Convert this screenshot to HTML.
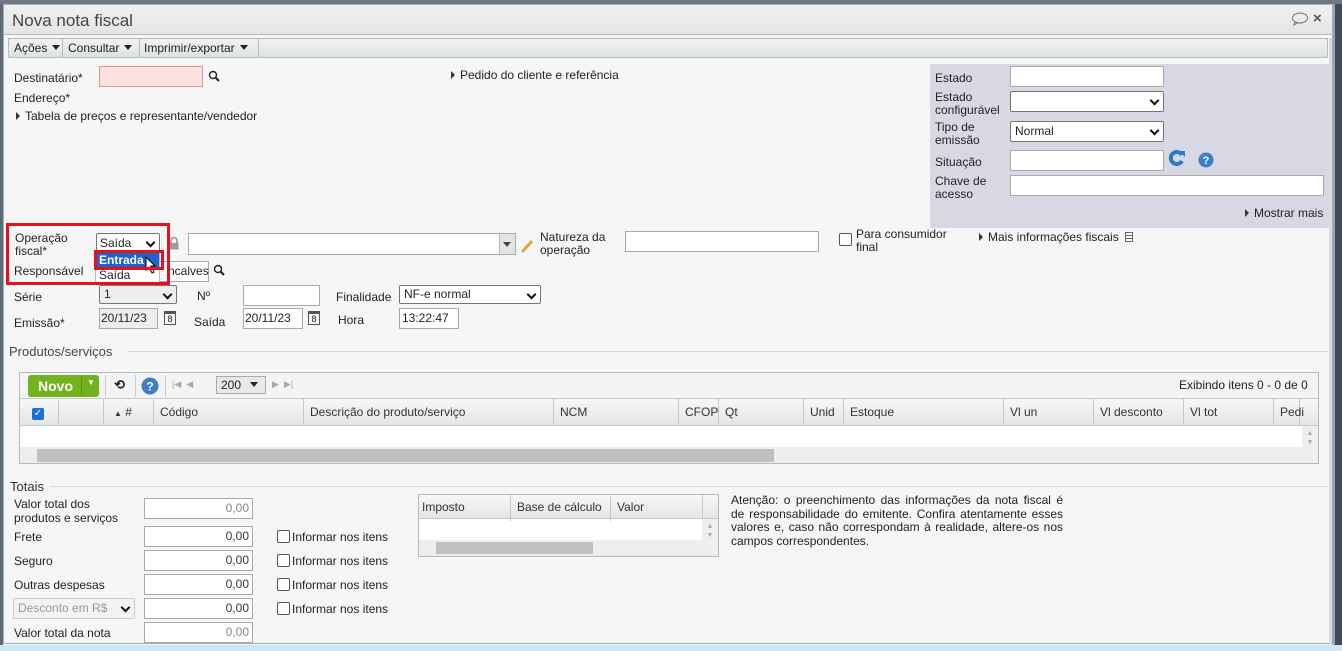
<!DOCTYPE html>
<html><head><meta charset="utf-8"><style>
*{box-sizing:border-box;margin:0;padding:0}
body{width:1342px;height:651px;overflow:hidden;background:#f4f6f6;font-family:"Liberation Sans",sans-serif;font-size:12px;color:#222;position:relative}
.a{position:absolute;white-space:nowrap}
.in{position:absolute;background:#fff;border:1px solid #a9a9a9;height:21px;font-size:12px;padding:2px 3px}
.sel{position:absolute;background:#fff;border:1px solid #767676;border-radius:2px;height:21px;padding:2px 4px;font-size:12px}
.sel:after{content:"";position:absolute;right:5px;top:5px;width:5px;height:5px;border-right:2px solid #111;border-bottom:2px solid #111;transform:rotate(45deg)}
.tri{display:inline-block;width:0;height:0;border-left:4px solid #333;border-top:4px solid transparent;border-bottom:4px solid transparent;margin-right:5px;vertical-align:0}
.dn{display:inline-block;width:0;height:0;border-top:5px solid #222;border-left:4px solid transparent;border-right:4px solid transparent;margin-left:5px;vertical-align:2px}
.num{text-align:right;color:#333}
.cb{position:absolute;width:13px;height:13px;border:1px solid #555;border-radius:2px;background:#fff}
.th{position:absolute;top:0;height:26px;border-right:1px solid #c6c9cc;padding:6px 6px;color:#333}
</style></head><body>
<div class="a" style="left:0;top:0;width:3px;height:651px;background:#5e6a76"></div>
<div class="a" style="left:1334px;top:0;width:8px;height:651px;background:#3d4c5c"></div>
<div class="a" style="left:1332px;top:0;width:3px;height:651px;background:#9aa3ab"></div>
<div class="a" style="left:0;top:0;width:1342px;height:4px;background:#6d7883"></div>
<div class="a" style="left:3px;top:4px;width:1330px;height:640px;border:1px solid #a8adb1;background:#f5f7f7"></div>
<div class="a" style="left:4px;top:5px;width:1328px;height:30px;background:linear-gradient(#eef0f1,#e3e5e7);border-bottom:1px solid #b8bcc0"></div>
<div class="a" style="left:12px;top:11px;font-size:17px;color:#444">Nova nota fiscal</div>
<svg class="a" style="left:1291px;top:12px" width="18" height="14"><ellipse cx="9" cy="6" rx="7.5" ry="5" fill="none" stroke="#777"/><path d="M4 10 L3 13 L7 10.5" fill="none" stroke="#777"/></svg>
<div class="a" style="left:1313px;top:10px;font-size:15px;font-weight:bold;color:#555">×</div>
<div class="a" style="left:8px;top:38px;width:1320px;height:20px;background:linear-gradient(#f1f2f3,#dfe2e4);border:1px solid #b8bcc0"></div>
<div class="a" style="left:9px;top:39px;width:54px;height:18px;border-right:1px solid #b8bcc0;padding:2px 5px">Ações<span class="dn"></span></div>
<div class="a" style="left:63px;top:39px;width:77px;height:18px;border-right:1px solid #b8bcc0;padding:2px 5px">Consultar<span class="dn"></span></div>
<div class="a" style="left:140px;top:39px;width:119px;height:18px;border-right:1px solid #b8bcc0;padding:2px 4px">Imprimir/exportar<span class="dn"></span></div>
<div class="a" style="left:1329px;top:38px;width:3px;height:606px;background:#d8dcdf"></div>

<div class="a" style="left:14px;top:71px">Destinatário*</div>
<div class="in" style="left:99px;top:66px;width:104px;background:#fde2e2;border-color:#e89090"></div>
<svg class="a" style="left:208px;top:70px" width="12" height="12"><circle cx="5" cy="5" r="3.5" fill="none" stroke="#222" stroke-width="1.4"/><path d="M7.5 7.5 L11 11" stroke="#222" stroke-width="2"/></svg>
<div class="a" style="left:451px;top:68px"><span class="tri"></span>Pedido do cliente e referência</div>
<div class="a" style="left:14px;top:91px">Endereço*</div>
<div class="a" style="left:16px;top:109px"><span class="tri"></span>Tabela de preços e representante/vendedor</div>

<div class="a" style="left:930px;top:64px;width:400px;height:164px;background:#d8d8e4"></div>
<div class="a" style="left:935px;top:71px">Estado</div>
<div class="in" style="left:1010px;top:66px;width:154px"></div>
<div class="a" style="left:935px;top:91px;line-height:13px">Estado<br>configurável</div>
<div class="sel" style="left:1010px;top:91px;width:154px"></div>
<div class="a" style="left:935px;top:121px;line-height:13px">Tipo de<br>emissão</div>
<div class="sel" style="left:1010px;top:121px;width:154px">Normal</div>
<div class="a" style="left:935px;top:155px">Situação</div>
<div class="in" style="left:1010px;top:150px;width:154px"></div>
<svg class="a" style="left:1168px;top:150px" width="18" height="16"><path d="M14 5 A6 6 0 1 0 14 11" fill="none" stroke="#2a7bc8" stroke-width="4"/><path d="M11 1 L17 1 L17 7 Z" fill="#2a7bc8"/></svg>
<svg class="a" style="left:1198px;top:152px" width="16" height="16"><circle cx="8" cy="8" r="7.5" fill="#3a7fc8"/><text x="8" y="12" font-size="11" font-weight="bold" fill="#fff" text-anchor="middle" font-family="Liberation Sans">?</text></svg>
<div class="a" style="left:935px;top:175px;line-height:13px">Chave de<br>acesso</div>
<div class="in" style="left:1010px;top:175px;width:314px"></div>
<div class="a" style="left:1245px;top:206px"><span class="tri"></span>Mostrar mais</div>

<div class="a" style="left:15px;top:232px;line-height:13px">Operação<br>fiscal*</div>
<div class="sel" style="left:96px;top:233px;width:64px;height:20px;padding:2px 3px">Saída</div>
<svg class="a" style="left:168px;top:236px" width="12" height="14"><path d="M3 7 V4.5 A3 3 0 0 1 9 4.5 V7" fill="none" stroke="#999" stroke-width="1.6"/><rect x="1.5" y="7" width="9" height="6.5" fill="#999"/></svg>
<div class="in" style="left:188px;top:233px;width:328px;height:22px"></div>
<div class="a" style="left:499px;top:234px;width:16px;height:20px;background:#e4e4e4;border-left:1px solid #bbb"><span class="dn" style="margin:8px 0 0 3px;border-top-color:#444"></span></div>
<svg class="a" style="left:520px;top:238px" width="14" height="16"><path d="M2 14 L12 3" stroke="#e8a040" stroke-width="3"/></svg>
<div class="a" style="left:540px;top:231px;line-height:13px">Natureza da<br>operação</div>
<div class="in" style="left:625px;top:231px;width:194px"></div>
<div class="cb" style="left:839px;top:233px"></div>
<div class="a" style="left:856px;top:228px;line-height:13px">Para consumidor<br>final</div>
<div class="a" style="left:979px;top:230px"><span class="tri"></span>Mais informações fiscais <span style="display:inline-block;width:8px;height:10px;border:1px solid #666;vertical-align:-1px;margin-left:3px;background:repeating-linear-gradient(#fff 0 2px,#666 2px 3px)"></span></div>

<div class="a" style="left:14px;top:264px">Responsável</div>
<div class="in" style="left:99px;top:261px;width:110px;padding-left:68px">ncalves</div>
<svg class="a" style="left:213px;top:264px" width="12" height="12"><circle cx="5" cy="5" r="3.5" fill="none" stroke="#222" stroke-width="1.4"/><path d="M7.5 7.5 L11 11" stroke="#222" stroke-width="2"/></svg>
<div class="a" style="left:95px;top:252px;width:65px;height:33px;background:#fff;border:1px solid #bbb;border-radius:0 0 3px 3px"></div>
<div class="a" style="left:96px;top:252px;width:63px;height:16px;background:#1a63c8;color:#fff;font-weight:bold;padding:1px 3px">Entrada</div>
<div class="a" style="left:99px;top:268px">Saída</div>
<svg class="a" style="left:145px;top:256px" width="12" height="18"><path d="M1 1 L1 14 L4 11 L7 17 L9 16 L6 10 L10 10 Z" fill="#fff" stroke="#000"/></svg>
<div class="a" style="left:94px;top:250px;width:70px;height:20px;border:3px solid #e8101c"></div>
<div class="a" style="left:6px;top:223px;width:164px;height:62px;border:3px solid #e8101c"></div>

<div class="a" style="left:14px;top:290px">Série</div>
<div class="sel" style="left:99px;top:285px;width:78px;height:19px;background:#eee;padding:1px 4px">1</div>
<div class="a" style="left:197px;top:289px">Nº</div>
<div class="in" style="left:243px;top:285px;width:77px"></div>
<div class="a" style="left:336px;top:290px">Finalidade</div>
<div class="sel" style="left:399px;top:285px;width:142px;height:19px;padding:1px 4px">NF-e normal</div>
<div class="a" style="left:14px;top:316px">Emissão*</div>
<div class="in" style="left:99px;top:308px;width:59px;background:#eee;padding:2px 1px">20/11/23</div>
<div class="a" style="left:164px;top:311px;width:12px;height:14px;border:1px solid #555;border-top-width:3px;font-size:9px;text-align:center;line-height:10px">8</div>
<div class="a" style="left:194px;top:315px">Saída</div>
<div class="in" style="left:243px;top:308px;width:60px;padding:2px 1px">20/11/23</div>
<div class="a" style="left:308px;top:311px;width:12px;height:14px;border:1px solid #555;border-top-width:3px;font-size:9px;text-align:center;line-height:10px">8</div>
<div class="a" style="left:338px;top:313px">Hora</div>
<div class="in" style="left:399px;top:308px;width:60px;padding:2px 2px">13:22:47</div>

<div class="a" style="left:9px;top:344px;font-size:13px;color:#444">Produtos/serviços</div>
<div class="a" style="left:128px;top:351px;width:1200px;height:1px;background:#d5d8da"></div>
<div class="a" style="left:19px;top:372px;width:1300px;height:92px;border:1px solid #b3b8bc;background:#fff"></div>
<div class="a" style="left:20px;top:373px;width:1298px;height:26px;background:#f3f4f5;border-bottom:1px solid #c6c9cc"></div>
<div class="a" style="left:28px;top:375px;width:71px;height:22px;background:#72b21c;border-radius:3px;color:#fff;font-weight:bold;font-size:14px;padding:3px 10px">Novo</div>
<div class="a" style="left:81px;top:377px;width:1px;height:18px;background:#5a9414"></div>
<div class="a" style="left:87px;top:378px;color:#fff;font-size:8px">▼</div>
<div class="a" style="left:105px;top:375px;width:1px;height:22px;background:#ccc"></div>
<div class="a" style="left:114px;top:377px;font-size:13px;font-weight:bold">⟲</div>
<div class="a" style="left:135px;top:375px;width:1px;height:22px;background:#ccc"></div>
<svg class="a" style="left:141px;top:377px" width="18" height="18"><circle cx="9" cy="9" r="8.5" fill="#3a7fc8"/><text x="9" y="13.5" font-size="12" font-weight="bold" fill="#fff" text-anchor="middle" font-family="Liberation Sans">?</text></svg>
<div class="a" style="left:165px;top:375px;width:1px;height:22px;background:#ccc"></div>
<div class="a" style="left:172px;top:379px;color:#aaa;font-size:9px">|◀ &nbsp;◀</div>
<div class="a" style="left:216px;top:376px;width:50px;height:18px;border:1px solid #aaa;background:#e8e8e8;padding:1px 4px">200<span class="dn" style="margin-left:9px"></span></div>
<div class="a" style="left:272px;top:379px;color:#aaa;font-size:9px">▶ &nbsp;▶|</div>
<div class="a" style="left:1179px;top:378px">Exibindo itens 0 - 0 de 0</div>
<div class="a" style="left:20px;top:399px;width:1298px;height:27px;background:linear-gradient(#f6f7f8,#e3e5e7);border-bottom:1px solid #c6c9cc">
<div class="th" style="left:0;width:39px"><span style="display:inline-block;width:12px;height:12px;background:#1a6fd8;border-radius:2px;color:#fff;font-size:10px;line-height:12px;text-align:center;margin-left:6px">✓</span></div>
<div class="th" style="left:39px;width:45px"></div>
<div class="th" style="left:84px;width:50px;padding-left:10px"><span style="font-size:8px">▲</span> #</div>
<div class="th" style="left:134px;width:150px">Código</div>
<div class="th" style="left:284px;width:250px">Descrição do produto/serviço</div>
<div class="th" style="left:534px;width:125px">NCM</div>
<div class="th" style="left:659px;width:40px">CFOP</div>
<div class="th" style="left:699px;width:85px">Qt</div>
<div class="th" style="left:784px;width:40px">Unid</div>
<div class="th" style="left:824px;width:160px">Estoque</div>
<div class="th" style="left:984px;width:90px">Vl un</div>
<div class="th" style="left:1074px;width:90px">Vl desconto</div>
<div class="th" style="left:1164px;width:90px">Vl tot</div>
<div class="th" style="left:1254px;width:26px">Pedi</div>
</div>
<div class="a" style="left:20px;top:447px;width:1283px;height:16px;background:#eceeef"></div>
<div class="a" style="left:37px;top:449px;width:737px;height:13px;background:#c0c0c0"></div>
<div class="a" style="left:1302px;top:426px;width:16px;height:37px;background:#eceeef;color:#aaa;font-size:7px;text-align:center;line-height:9px;padding-top:3px">▲<br>▼</div>

<div class="a" style="left:10px;top:479px;font-size:13px;color:#333">Totais</div>
<div class="a" style="left:50px;top:486px;width:1278px;height:1px;background:#d5d8da"></div>
<div class="a" style="left:14px;top:497px;line-height:14px">Valor total dos<br>produtos e serviços</div>
<div class="in num" style="left:144px;top:498px;width:109px;color:#888">0,00</div>
<div class="a" style="left:14px;top:530px">Frete</div>
<div class="in num" style="left:144px;top:526px;width:109px">0,00</div>
<div class="a" style="left:14px;top:554px">Seguro</div>
<div class="in num" style="left:144px;top:550px;width:109px">0,00</div>
<div class="a" style="left:14px;top:578px">Outras despesas</div>
<div class="in num" style="left:144px;top:574px;width:109px">0,00</div>
<div class="sel" style="left:13px;top:598px;width:122px;color:#999;border-color:#ccc;background:#f3f3f3">Desconto em R$</div>
<div class="in num" style="left:144px;top:598px;width:109px">0,00</div>
<div class="a" style="left:14px;top:626px">Valor total da nota</div>
<div class="in num" style="left:144px;top:622px;width:109px;color:#888">0,00</div>
<div class="cb" style="left:277px;top:530px"></div><div class="a" style="left:292px;top:530px">Informar nos itens</div>
<div class="cb" style="left:277px;top:554px"></div><div class="a" style="left:292px;top:554px">Informar nos itens</div>
<div class="cb" style="left:277px;top:578px"></div><div class="a" style="left:292px;top:578px">Informar nos itens</div>
<div class="cb" style="left:277px;top:602px"></div><div class="a" style="left:292px;top:602px">Informar nos itens</div>

<div class="a" style="left:418px;top:494px;width:301px;height:63px;border:1px solid #b3b8bc;background:#fff"></div>
<div class="a" style="left:419px;top:495px;width:299px;height:24px;background:linear-gradient(#f6f7f8,#e3e5e7);border-bottom:1px solid #c6c9cc">
<div class="th" style="left:0;width:92px;padding:5px 3px">Imposto</div>
<div class="th" style="left:92px;width:100px;padding:5px 6px">Base de cálculo</div>
<div class="th" style="left:192px;width:92px;padding:5px 6px">Valor</div>
</div>
<div class="a" style="left:419px;top:540px;width:283px;height:16px;background:#eceeef"></div>
<div class="a" style="left:436px;top:542px;width:157px;height:12px;background:#c0c0c0"></div>
<div class="a" style="left:702px;top:519px;width:16px;height:37px;background:#eceeef;color:#aaa;font-size:7px;text-align:center;line-height:9px;padding-top:3px">▲<br>▼</div>
<div class="a" style="left:731px;top:494px;line-height:13.5px;width:332px;white-space:normal;text-align:justify">Atenção: o preenchimento das informações da nota fiscal é de responsabilidade do emitente. Confira atentamente esses valores e, caso não correspondam à realidade, altere-os nos campos correspondentes.</div>
<div class="a" style="left:0;top:645px;width:1342px;height:6px;background:#cfe6f5"></div>
</body></html>
